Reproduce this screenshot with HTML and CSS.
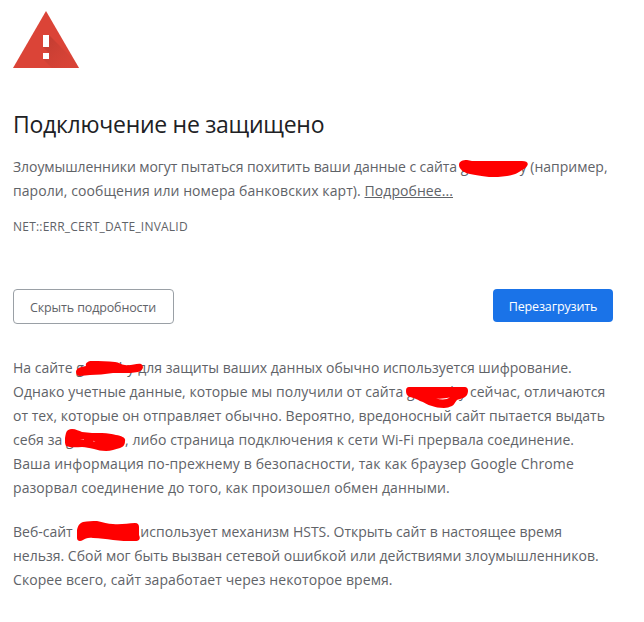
FILE: index.html
```html
<!DOCTYPE html>
<html lang="ru">
<head>
    <meta charset="UTF-8">
    <meta name="viewport" content="width=device-width, initial-scale=1.0">
    <title>Ошибка нарушения конфиденциальности</title>
    <link rel="stylesheet" href="styles.css">
</head>
<body>
    <div class="interstitial">
        <svg class="icon" width="66" height="58" viewBox="0 0 66 58">
            <defs>
                <linearGradient id="shade" gradientUnits="userSpaceOnUse" x1="34" y1="32" x2="56" y2="54">
                    <stop offset="0" stop-color="#b93a2f" stop-opacity="0.65"/>
                    <stop offset="1" stop-color="#d04236" stop-opacity="0.3"/>
                </linearGradient>
            </defs>
            <path d="M33 0L66 57H0z" fill="#db4437"/>
            <path d="M36 24L61.900 50L66 57H39L30 48L36 42L30 36z" fill="url(#shade)"/>
            <path d="M30 24h6v12h-6zM30 42h6v6h-6z" fill="#fff"/>
        </svg>

        <h1>Подключение не защищено</h1>

        <p class="main-message">
            <span class="line"><span class="tight">Злоумышленники могут пытаться похитить ваши данные с сайта</span> <span class="site site-1">g<svg class="mark" width="70" height="18" viewBox="0 0 70 18"><path d="M0 5C0 1 4 0 8 0L13 1H63C68 1 70 3 68 6C67 8 65 9 63 10C58 14 54 15 48 16C42 17 36 17 30 17C22 16 16 15 11 14C5 13 0 9 0 5z"/></svg><span>y</span></span> (например,</span>
            <span class="line loose">пароли, сообщения или номера банковских карт). <a href="#">Подробнее...</a></span>
        </p>
        <div class="error-code">NET::ERR_CERT_DATE_INVALID</div>

        <div class="buttons">
            <button class="btn secondary">Скрыть подробности</button>
            <button class="btn primary">Перезагрузить</button>
        </div>

        <div class="details">
            <p>
                <span class="line">На сайте <span class="site site-2">g<svg class="mark" width="68" height="16" viewBox="0 0 68 16"><path d="M0 11C0 8 3 6 10 5C9 2 12 0 16 0C24 0 32 0 39 1C43 1 45 4 49 4C55 5 61 2 65 3C68 5 68 9 62 11C57 12 52 12 47 12L37 12C29 13 21 14 14 14L4 15C1 15 0 13 0 11z"/></svg><span>by</span></span>для защиты ваших данных обычно используется шифрование.</span>
                <span class="line slight">Однако учетные данные, которые мы получили от сайта <span class="site site-3">g<svg class="mark" width="64" height="22" viewBox="0 0 64 22"><path d="M0 4C0 1 1 0 3 0H59C62 0 63 4 61 8C59 11 54 12 51 13C49 15 48 18 46 19C43 20 41 21 38 21C33 21 29 20 26 19C21 18 18 15 14 14C11 12 8 11 4 10C1 9 0 7 0 4z"/><path class="gap" d="M30 11.500Q37 12 44 10.500Q39 14 30 11.500z"/></svg><span>by</span></span>сейчас, отличаются</span>
                <span class="line">от тех, которые он отправляет обычно. Вероятно, вредоносный сайт пытается выдать</span>
                <span class="line loose">себя за <span class="site site-4">g<svg class="mark" width="62" height="23" viewBox="0 0 62 23"><path d="M1 4C2 1 4 0 7 0C11 0 14 2 17 3C24 4 30 4 37 4C43 4 47 5 51 6C57 7 61 9 60 12C60 16 58 18 55 19C50 20 46 22 41 22C36 22 33 21 29 20C24 19 21 18 17 18C12 18 6 19 1 17C-1 13 0 8 1 4z"/><path class="gap" d="M15 10.500L19 10.200V10.800zM28 11.800L30.500 12.500L28.500 12.500z"/></svg></span>, либо страница подключения к сети Wi-Fi прервала соединение.</span>
                <span class="line wide">Ваша информация по-прежнему в безопасности, так как браузер Google Chrome</span>
                <span class="line loose">разорвал соединение до того, как произошел обмен данными.</span>
            </p>
            <p>
                <span class="line">Веб-сайт <span class="site site-5"><svg class="mark" width="64" height="21" viewBox="0 0 64 21"><path d="M0 17V9C1 4 3 2 6 1C11 0 15 0 20 0C26 1 31 3 36 3C44 4 51 2 58 2C61 2 62 4 62 6V14C64 18 62 20 58 20C50 20 43 20 36 19C29 18 23 17 16 17C11 16 8 18 6 19C3 21 0 20 0 17z"/></svg></span>использует механизм HSTS. Открыть сайт в настоящее время</span>
                <span class="line">нельзя. Сбой мог быть вызван сетевой ошибкой или действиями злоумышленников.</span>
                <span class="line loose">Скорее всего, сайт заработает через некоторое время.</span>
            </p>
        </div>
    </div>
</body>
</html>
```

FILE: styles.css
```css
* {
    margin: 0;
    padding: 0;
    box-sizing: border-box;
}

body {
    background: #fff;
    color: #5f6368;
    font-family: 'Open Sans', 'Noto Sans', sans-serif;
    font-size: 14px;
    line-height: 24px;
}

.interstitial {
    width: 600px;
    margin: 11px 0 0 13px;
}

.icon {
    display: block;
}

h1 {
    margin-top: 39px;
    color: #202124;
    font-size: 23px;
    font-weight: 400;
    letter-spacing: -0.27px;
    line-height: 32px;
    white-space: nowrap;
}

.main-message {
    margin-top: 15px;
}

.line {
    display: block;
    white-space: nowrap;
}

.tight {
    letter-spacing: -0.07px;
}

.slight {
    letter-spacing: 0.045px;
}

.loose {
    letter-spacing: 0.075px;
}

.wide {
    letter-spacing: 0.125px;
}

a {
    color: inherit;
    text-decoration: underline;
}

.error-code {
    margin-top: 15px;
    font-size: 12px;
    letter-spacing: 0.22px;
    line-height: 18px;
}

.buttons {
    display: flex;
    justify-content: space-between;
    align-items: flex-start;
    margin-top: 53px;
}

.btn {
    padding-top: 2px;
    border: none;
    border-radius: 4px;
    font-family: inherit;
    font-size: 12.5px;
    letter-spacing: -0.13px;
    white-space: nowrap;
    cursor: pointer;
}

.btn.secondary {
    width: 161px;
    height: 35px;
    padding-right: 1px;
    border: 1px solid #9aa0a6;
    background: #fff;
    color: #5f6368;
}

.btn.primary {
    width: 120px;
    height: 33px;
    background: #1a73e8;
    color: #fff;
}

.details {
    margin-top: 32px;
}

.details p + p {
    margin-top: 20px;
}

/* site name scribbled over */
.site {
    position: relative;
    display: inline-flex;
    justify-content: space-between;
    height: 24px;
    vertical-align: top;
}

.mark {
    position: absolute;
    fill: #f00;
}

.gap {
    fill: #fff;
}

.site-1 {
    width: 66px;
}

.site-1 .mark {
    top: 5px;
    left: -2px;
}

.site-2 {
    width: 62px;
    padding-right: 4px;
}

.site-2 .mark {
    top: 5px;
    left: 0;
}

.site-3 {
    width: 63px;
    padding-right: 4px;
}

.site-3 .mark {
    top: 7px;
    left: -1px;
}

.site-4 {
    width: 59px;
}

.site-4 .mark {
    top: 1px;
    left: -1px;
}

.site-5 {
    width: 64px;
}

.site-5 .mark {
    top: 1px;
    left: 1px;
}
```
